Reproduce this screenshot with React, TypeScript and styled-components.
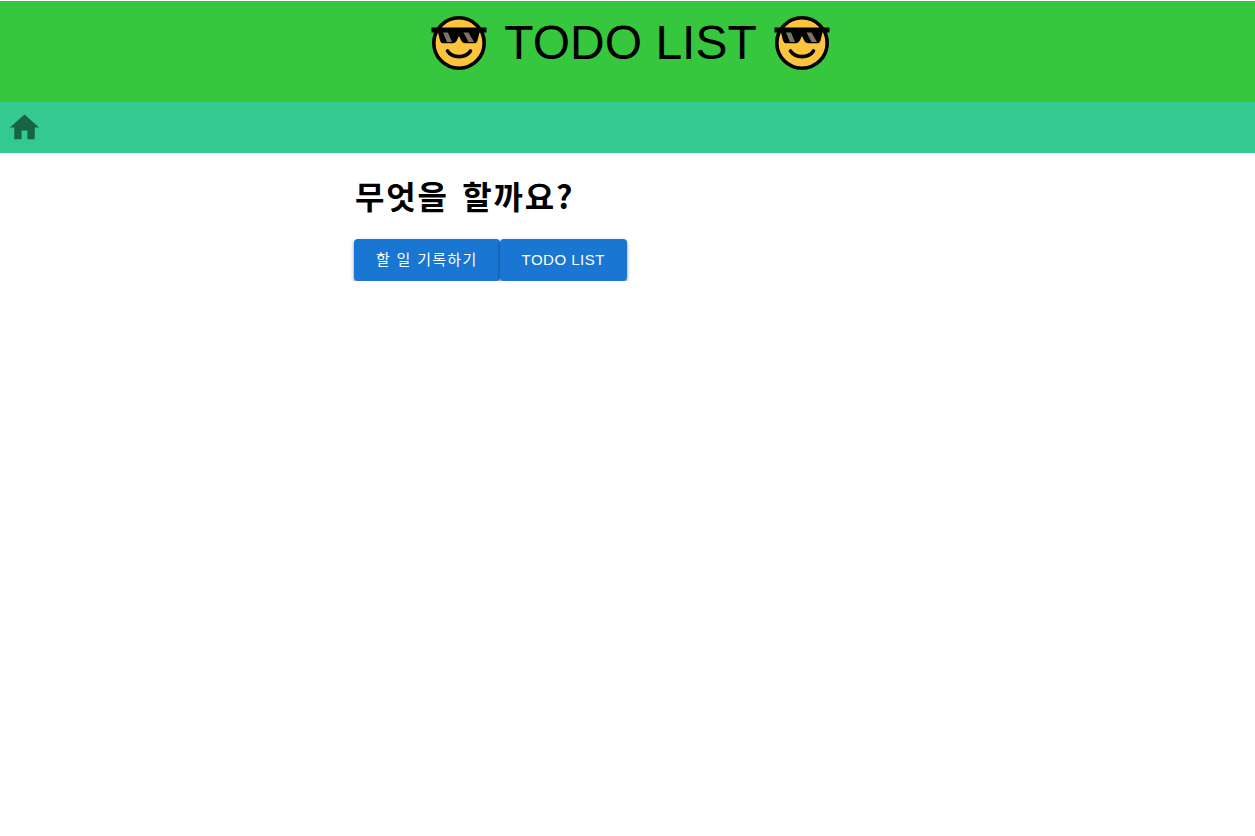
import React from 'react';
import styled, { createGlobalStyle } from 'styled-components';

const Global = createGlobalStyle`
  html, body { margin: 0; padding: 0; background: #fff; }
  body { font-family: "Liberation Sans", "Noto Sans CJK KR", sans-serif; }
`;

const Page = styled.div`
  padding-top: 1px;
`;

const Header = styled.header`
  height: 101px;
  background: #37c73e;
  display: flex;
  justify-content: center;
  align-items: flex-start;
  padding-left: 6px;
  box-sizing: border-box;
`;

const Title = styled.h1`
  margin: 14px 0 0;
  display: flex;
  align-items: center;
  gap: 17px;
  font-size: 48px;
  line-height: 56px;
  font-weight: 400;
  color: #000;
`;

const Nav = styled.nav`
  height: 51px;
  background: #34c98e;
  display: flex;
  align-items: center;
  padding-left: 7px;
`;

const HomeLink = styled.a`
  display: flex;
  width: 35px;
  height: 35px;
  color: #166445;
`;

const Main = styled.main`
  width: 547px;
  margin: 0 auto;
`;

const Heading = styled.h2`
  margin: 22px 0 24px;
  padding-left: 1px;
  font-family: "Noto Sans CJK KR", "Liberation Sans", sans-serif;
  font-size: 32px;
  line-height: 40px;
  font-weight: 700;
  letter-spacing: 1.8px;
  word-spacing: 4.5px;
  color: #000;
`;

const Actions = styled.div`
  display: flex;
`;

const Button = styled.button<{ $spacing: number; $lift: number }>`
  height: 42px;
  padding: 0 22px ${(p) => p.$lift}px;
  border: 0;
  border-radius: 4px;
  background: #1976d2;
  color: #fff;
  font-family: "Liberation Sans", "Noto Sans CJK KR", sans-serif;
  font-size: 15px;
  font-weight: 400;
  letter-spacing: ${(p) => p.$spacing}px;
  box-shadow: 0 2px 3px rgba(0, 0, 0, 0.35), 0 1px 5px rgba(0, 0, 0, 0.15);
`;

const Cool = () => (
  <svg width="56" height="56" viewBox="0 0 56 56" aria-hidden="true">
    <circle cx="28" cy="28" r="25.2" fill="#fcc43c" stroke="#000" strokeWidth="3.6" />
    <path d="M0.500 12.500h55v5h-7l-2 8a3.500 3.500 0 0 1-3.500 2.700H34a4 4 0 0 1-3.700-2.500L28 21l-2.300 4.700a4 4 0 0 1-3.700 2.500H12.500A3.500 3.500 0 0 1 9 25.500l-2-8H0.500z" fill="#000" />
    <path d="M12 17.500h5L21 27h-5zM32.500 17.500h5L43 27h-5.500z" fill="#7d7466" />
    <path d="M16.500 36c5 7.500 18 7.500 23 0" fill="none" stroke="#000" strokeWidth="3.6" strokeLinecap="round" />
  </svg>
);

export default function App() {
  return (
    <Page>
      <Global />
      <Header>
        <Title>
          <Cool />
          TODO LIST
          <Cool />
        </Title>
      </Header>
      <Nav>
        <HomeLink href="#" aria-label="home">
          <svg viewBox="0 0 24 24" width="35" height="35" fill="currentColor">
            <path d="M10 20v-6h4v6h5v-8h3L12 3 2 12h3v8z" />
          </svg>
        </HomeLink>
      </Nav>
      <Main>
        <Heading>무엇을 할까요?</Heading>
        <Actions>
          <Button $spacing={1.3} $lift={4}>할 일 기록하기</Button>
          <Button $spacing={0.5} $lift={2}>TODO LIST</Button>
        </Actions>
      </Main>
    </Page>
  );
}
